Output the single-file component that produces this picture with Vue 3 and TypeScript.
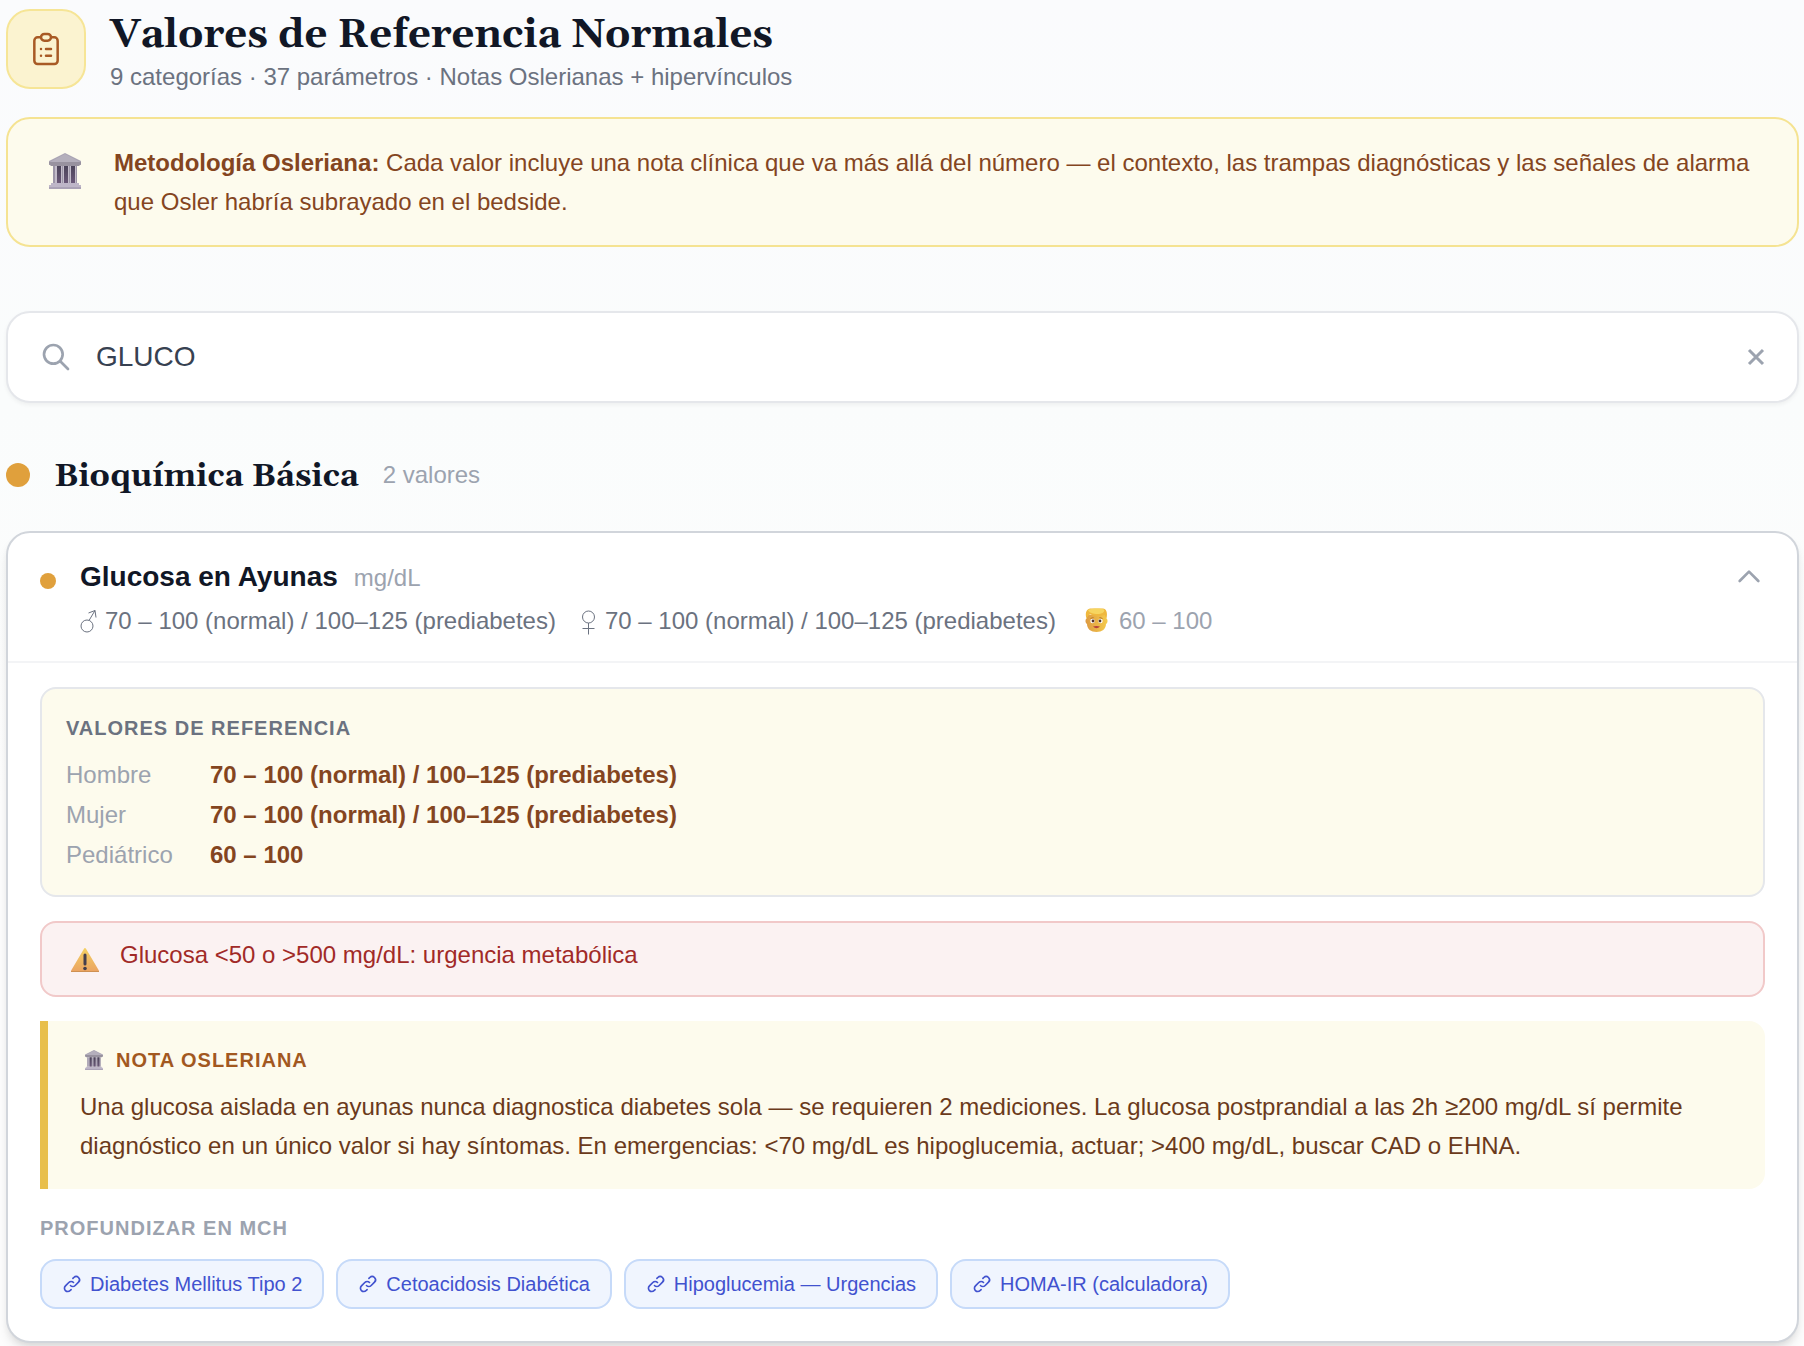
<script setup lang="ts">
import { computed, ref } from 'vue'

interface ReferenceRow {
  label: string
  value: string
}

const query = ref('GLUCO')
const expanded = ref(true)

const range = '70 – 100 (normal) / 100–125 (prediabetes)'
const rows: ReferenceRow[] = [
  { label: 'Hombre', value: range },
  { label: 'Mujer', value: range },
  { label: 'Pediátrico', value: '60 – 100' },
]
const links: string[] = [
  'Diabetes Mellitus Tipo 2',
  'Cetoacidosis Diabética',
  'Hipoglucemia — Urgencias',
  'HOMA-IR (calculadora)',
]
const chevron = computed(() => (expanded.value ? 'M5 15l7-7 7 7' : 'M19 9l-7 7-7-7'))
</script>

<template>
  <svg class="defs" width="0" height="0" aria-hidden="true">
    <defs>
      <linearGradient id="column" x1="0" x2="0" y1="0" y2="1">
        <stop offset="0" stop-color="#4b4459" />
        <stop offset="1" stop-color="#6a5878" />
      </linearGradient>
      <linearGradient id="warn" x1="0" x2="0" y1="0" y2="1">
        <stop offset="0" stop-color="#f4cf63" />
        <stop offset="1" stop-color="#eba562" />
      </linearGradient>
      <linearGradient id="face" x1="0" x2="1" y1="0" y2="0">
        <stop offset="0" stop-color="#dd9a42" />
        <stop offset="1" stop-color="#f5cb4c" />
      </linearGradient>
      <symbol id="museum" viewBox="0 0 34 36">
        <path d="M17 0 33 8v4H1V8z" fill="#a9a3b3" />
        <path d="M17 1 32 9H2z" fill="#b4afbc" />
        <path d="M1 9h32v2l-2 2H3l-2-2z" fill="#98929f" />
        <path d="M5 13h24v17H5z" fill="#c3bcca" />
        <path d="M9 13h4v17H9zM16 13h4v17h-4zM23 13h4v17h-4z" fill="url(#column)" />
        <path d="M5 13h2v17H5zM14 13h1v17h-1zM21 13h1v17h-1zM28 13h1v17h-1z" fill="#9d96a8" />
        <path d="M3 30h28v2h2v4H1v-4h2z" fill="#beb6c8" />
        <path d="M1 34h32v2H1z" fill="#aaa2b6" />
      </symbol>
    </defs>
  </svg>

  <main class="page">
    <header class="page-header">
      <div class="badge">
        <svg width="40" height="40" viewBox="0 0 24 24" fill="none" stroke="currentColor" stroke-width="1.5" stroke-linecap="round" stroke-linejoin="round" aria-hidden="true">
          <path d="M9 5H7a2 2 0 00-2 2v12a2 2 0 002 2h10a2 2 0 002-2V7a2 2 0 00-2-2h-2M9 5a2 2 0 002 2h2a2 2 0 002-2M9 5a2 2 0 012-2h2a2 2 0 012 2m-3 7h3m-3 4h3m-6-4h.01M9 16h.01" />
        </svg>
      </div>
      <div>
        <h1 class="page-title">Valores de Referencia Normales</h1>
        <p class="page-subtitle">9 categorías · 37 parámetros · Notas Oslerianas + hipervínculos</p>
      </div>
    </header>

    <aside class="banner">
      <svg class="banner-icon" width="34" height="36" aria-hidden="true"><use href="#museum" /></svg>
      <p class="banner-text">
        <strong>Metodología Osleriana:</strong> Cada valor incluye una nota clínica que va más allá del número — el contexto, las trampas diagnósticas y las señales de alarma que Osler habría subrayado en el bedside.
      </p>
    </aside>

    <div class="search">
      <svg class="search-icon" width="32" height="32" viewBox="0 0 24 24" fill="none" stroke="currentColor" stroke-width="2" stroke-linecap="round" stroke-linejoin="round" aria-hidden="true">
        <path d="M21 21l-6-6m2-5a7 7 0 11-14 0 7 7 0 0114 0z" />
      </svg>
      <input v-model="query" class="search-input" type="text" aria-label="Buscar parámetro" />
      <button class="clear" type="button" aria-label="Limpiar" @click="query = ''">
        <svg width="18" height="18" viewBox="0 0 18 18" fill="none" stroke="currentColor" stroke-width="3" aria-hidden="true">
          <path d="M2 2l14 14M16 2L2 16" />
        </svg>
      </button>
    </div>

    <section>
      <div class="section-header">
        <span class="section-dot"></span>
        <h2 class="section-title">Bioquímica Básica</h2>
        <span class="section-count">2 valores</span>
      </div>

      <article class="card">
        <button class="card-head" type="button" :aria-expanded="expanded" @click="expanded = !expanded">
          <span class="card-dot"></span>
          <span class="card-summary">
            <span class="card-line">
              <span class="card-name">Glucosa en Ayunas</span>
              <span class="card-unit">mg/dL</span>
            </span>
            <span class="ranges">
              <span class="range">
                <svg width="18" height="28" viewBox="0 0 18 28" fill="none" stroke="currentColor" aria-label="Hombre">
                  <circle cx="7" cy="19" r="6" />
                  <path d="M9 13.5l6-10M8.500 6l6.500-2.500 1 7" />
                </svg>
                <span>{{ range }}</span>
              </span>
              <span class="range">
                <svg width="18" height="28" viewBox="0 0 18 28" fill="none" stroke="currentColor" aria-label="Mujer">
                  <circle cx="8.500" cy="10" r="6" />
                  <path d="M8.500 16v11.500M2.500 21.500h12" />
                </svg>
                <span>{{ range }}</span>
              </span>
              <span class="range child">
                <svg width="32" height="28" viewBox="0 0 32 28" aria-label="Pediátrico">
                  <path d="M7 8v3c-2 1-2 5 0 6 0 5 4 8 9.500 8s9.500-3 9.500-8c2-1 2-5 0-6V8z" fill="url(#face)" />
                  <path d="M6.500 11.500C5 7 6 2 10 1.500h13c3 0 5 4 3.500 10l-2-3.500c-5 1.500-11 1-14-.500-2 0-2.500 2-4 4z" fill="#efb83e" />
                  <path d="M8 3c4-2 12-2 16-.500 1 2-1 4-5 4.500S9 6 8 3z" fill="#f6d560" />
                  <circle cx="12.500" cy="14" r="2.200" fill="#fff" />
                  <circle cx="20.500" cy="14" r="2.200" fill="#fff" />
                  <circle cx="13" cy="14" r="1.400" fill="#52332d" />
                  <circle cx="20" cy="14" r="1.400" fill="#52332d" />
                  <path d="M10.500 11.500l3-1M19.500 10.500l3 1" stroke="#b77a2c" />
                  <path d="M13 19.500q3.500-1 7 0-3.500 3.500-7 0z" fill="#b5403c" />
                </svg>
                <span>60 – 100</span>
              </span>
            </span>
          </span>
          <svg class="chevron" width="32" height="32" viewBox="0 0 24 24" fill="none" stroke="currentColor" stroke-width="2" stroke-linecap="round" stroke-linejoin="round" aria-hidden="true">
            <path :d="chevron" />
          </svg>
        </button>

        <div v-if="expanded" class="card-body">
          <div class="reference">
            <h3 class="label label-reference">VALORES DE REFERENCIA</h3>
            <table class="reference-table">
              <tbody>
                <tr v-for="row in rows" :key="row.label">
                  <th scope="row">{{ row.label }}</th>
                  <td>{{ row.value }}</td>
                </tr>
              </tbody>
            </table>
          </div>

          <div class="alert">
            <svg width="38" height="40" viewBox="0 0 38 40" aria-hidden="true">
              <path d="M19 10L32 32H6z" fill="url(#warn)" stroke="url(#warn)" stroke-width="2" stroke-linejoin="round" />
              <path d="M5 32.500h28" stroke="#cf9152" />
              <path d="M19 16v9" stroke="#453f4d" stroke-width="3" stroke-linecap="round" />
              <circle cx="19" cy="29.500" r="1.800" fill="#453f4d" />
            </svg>
            <p class="alert-text">Glucosa &lt;50 o &gt;500 mg/dL: urgencia metabólica</p>
          </div>

          <div class="note">
            <h3 class="label label-note">
              <svg class="note-icon" width="20" height="20" aria-hidden="true"><use href="#museum" /></svg>
              <span>NOTA OSLERIANA</span>
            </h3>
            <p class="note-text">
              Una glucosa aislada en ayunas nunca diagnostica diabetes sola — se requieren 2 mediciones. La glucosa postprandial a las 2h ≥200 mg/dL sí permite diagnóstico en un único valor si hay síntomas. En emergencias: &lt;70 mg/dL es hipoglucemia, actuar; &gt;400 mg/dL, buscar CAD o EHNA.
            </p>
          </div>

          <h3 class="label label-links">PROFUNDIZAR EN MCH</h3>
          <nav class="chips">
            <a v-for="link in links" :key="link" class="chip" href="#">
              <svg width="20" height="20" viewBox="0 0 24 24" fill="none" stroke="currentColor" stroke-width="2" stroke-linecap="round" stroke-linejoin="round" aria-hidden="true">
                <path d="M13.828 10.172a4 4 0 00-5.656 0l-4 4a4 4 0 105.656 5.656l1.102-1.101m-.758-4.899a4 4 0 005.656 0l4-4a4 4 0 00-5.656-5.656l-1.100 1.100" />
              </svg>
              {{ link }}
            </a>
          </nav>
        </div>
      </article>
    </section>
  </main>
</template>

<style>
body {
  margin: 0;
}
</style>

<style scoped>
* {
  box-sizing: border-box;
}

.defs {
  position: absolute;
}

.page {
  min-height: 100vh;
  padding: 5px 5px 0 6px;
  overflow: hidden;
  font-family: 'Liberation Sans', Arial, sans-serif;
  font-size: 24px;
  line-height: 32px;
  color: #111726;
  background: linear-gradient(#fafbfd, #fafcfc 30%, #fdfdfd 60%);
}

h1,
h2,
h3,
p {
  margin: 0;
}

svg {
  display: block;
  flex-shrink: 0;
}

.page-header {
  display: flex;
  align-items: center;
  gap: 24px;
  margin-bottom: 24px;
}

.badge {
  display: flex;
  align-items: center;
  justify-content: center;
  width: 80px;
  height: 80px;
  border: 2px solid #f6e596;
  border-radius: 24px;
  background: #fbf3d0;
  color: #a85a25;
}

.page-title {
  padding-top: 6px;
  font-family: Georgia, Gelasio, 'Liberation Serif', serif;
  font-size: 40px;
  line-height: 50px;
  font-weight: 700;
}

.page-subtitle {
  color: #6b7280;
}

.banner {
  display: flex;
  gap: 32px;
  margin-bottom: 64px;
  padding: 24px 32px;
  border: 2px solid #f5e392;
  border-radius: 24px;
  background: #fdfbed;
  color: #84451f;
}

.banner-icon {
  margin: 10px 0 0 8px;
}

.banner-text,
.note-text {
  line-height: 39px;
}

.search {
  display: flex;
  align-items: center;
  gap: 24px;
  height: 92px;
  margin-bottom: 48px;
  padding: 0 32px;
  border: 2px solid #e5e7eb;
  border-radius: 24px;
  background: #fff;
  box-shadow: 0 2px 4px rgba(0, 0, 0, 0.05);
  color: #9ca3af;
}

.search-input {
  flex: 1;
  min-width: 0;
  padding: 0;
  border: 0;
  outline: 0;
  background: transparent;
  font: inherit;
  font-size: 28px;
  line-height: 40px;
  color: #374151;
}

.clear {
  padding: 0;
  border: 0;
  background: none;
  color: inherit;
}

.section-header {
  display: flex;
  align-items: center;
  gap: 24px;
  margin-bottom: 32px;
}

.section-dot {
  width: 24px;
  height: 24px;
  border-radius: 50%;
  background: #e0a03c;
}

.section-title {
  padding-top: 4px;
  font-family: Georgia, Gelasio, 'Liberation Serif', serif;
  font-size: 32px;
  line-height: 44px;
  font-weight: 700;
}

.section-count {
  color: #9ca3af;
}

.card {
  border: 2px solid #d1d5db;
  border-radius: 24px;
  background: #fff;
  box-shadow: 0 8px 12px -2px rgba(0, 0, 0, 0.1), 0 4px 8px -4px rgba(0, 0, 0, 0.1);
}

.card-head {
  display: flex;
  align-items: flex-start;
  gap: 24px;
  width: 100%;
  padding: 24px 32px;
  border: 0;
  background: none;
  font: inherit;
  text-align: left;
  color: inherit;
}

.card-dot {
  width: 16px;
  height: 16px;
  margin-top: 16px;
  border-radius: 50%;
  background: #e0a03c;
}

.card-summary {
  flex: 1;
  display: flex;
  flex-direction: column;
  gap: 8px;
}

.card-line {
  display: flex;
  align-items: baseline;
  gap: 16px;
}

.card-name {
  font-size: 28px;
  line-height: 40px;
  font-weight: 700;
}

.card-unit {
  color: #9ca3af;
}

.ranges {
  display: flex;
  flex-wrap: wrap;
  gap: 0 24px;
  color: #6b7280;
}

.range {
  display: flex;
  align-items: center;
  gap: 7px;
}

.child {
  color: #9ca3af;
}

.chevron {
  margin-top: 4px;
  color: #9ca3af;
}

.card-body {
  padding: 24px 32px 32px;
  border-top: 2px solid #f3f4f6;
}

.label {
  font-size: 20px;
  line-height: 30px;
  font-weight: 700;
  letter-spacing: 1px;
}

.reference {
  margin-bottom: 24px;
  padding: 24px 24px 20px;
  border: 2px solid #e5e7eb;
  border-radius: 16px;
  background: #fdfbed;
}

.label-reference {
  margin-bottom: 12px;
  color: #6b7280;
}

.reference-table {
  border-collapse: collapse;
}

.reference-table th {
  width: 144px;
  padding: 4px 0;
  font-weight: 400;
  text-align: left;
  color: #9ca3af;
}

.reference-table td {
  padding: 4px 0;
  font-weight: 700;
  color: #84451f;
}

.alert {
  display: flex;
  gap: 16px;
  margin-bottom: 24px;
  padding: 16px 24px;
  border: 2px solid #f1c9c9;
  border-radius: 16px;
  background: #fbf2f2;
  color: #a12a27;
}

.note {
  margin-bottom: 24px;
  padding: 24px 32px;
  border-left: 8px solid #e8bf4c;
  border-radius: 0 16px 16px 0;
  background: #fdfbed;
}

.label-note {
  display: flex;
  align-items: center;
  gap: 12px;
  margin-bottom: 12px;
  color: #a2581f;
}

.note-icon {
  margin-left: 4px;
}

.note-text {
  color: #6b3a1b;
}

.label-links {
  margin-bottom: 16px;
  color: #9ca3af;
}

.chips {
  display: flex;
  flex-wrap: wrap;
  gap: 12px;
}

.chip {
  display: flex;
  align-items: center;
  gap: 8px;
  padding: 8px 20px;
  border: 2px solid #c6daf9;
  border-radius: 16px;
  background: #f0f5fe;
  font-size: 20px;
  line-height: 30px;
  text-decoration: none;
  color: #4152cf;
}
</style>
